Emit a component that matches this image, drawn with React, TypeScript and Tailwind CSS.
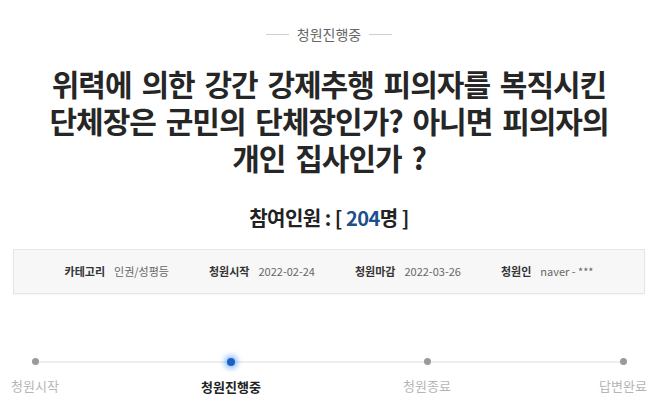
import React from 'react';

const font = { fontFamily: '"Noto Sans CJK KR", "Noto Sans", sans-serif' };

const steps = [
  { label: '청원시작', active: false },
  { label: '청원진행중', active: true },
  { label: '청원종료', active: false },
  { label: '답변완료', active: false },
];

const info = [
  { label: '카테고리', value: '인권/성평등' },
  { label: '청원시작', value: '2022-02-24' },
  { label: '청원마감', value: '2022-03-26' },
  { label: '청원인', value: 'naver - ***' },
];

export default function App() {
  return (
    <div
      className="w-[658px] h-[414px] bg-white flex flex-col items-center overflow-hidden"
      style={font}
    >
      {/* status header */}
      <div className="mt-[23px] flex items-center gap-[8px]">
        <span className="w-[23px] h-px bg-[#cfcfcf]" />
        <span className="text-[14px] leading-[22px] text-[#666]">청원진행중</span>
        <span className="w-[23px] h-px bg-[#cfcfcf]" />
      </div>

      {/* title */}
      <h1 className="mt-[20px] text-center text-[30px] leading-[37px] font-bold text-[#262626] tracking-[-1px] [word-spacing:4px]">
        위력에 의한 강간 강제추행 피의자를 복직시킨
        <br />
        단체장은 군민의 단체장인가? 아니면 피의자의
        <br />
        개인 집사인가 ?
      </h1>

      {/* participants */}
      <div className="mt-[28px] text-[20px] leading-[28px] font-bold text-[#222] tracking-[-0.5px]">
        참여인원 : [ <span className="text-[#1d4f8c]">204</span>명 ]
      </div>

      {/* info box */}
      <div className="mt-[17px] w-[632px] h-[45px] border border-[#e6e6e6] bg-[#f7f7f7] shadow-[0_1px_2px_rgba(0,0,0,0.04)] flex items-center justify-center gap-[40px] text-[11px]">
        {info.map((it) => (
          <div key={it.label} className="flex items-center gap-[9px]">
            <span className="font-bold text-[#333]">{it.label}</span>
            <span className="text-[#666]">{it.value}</span>
          </div>
        ))}
      </div>

      {/* stepper */}
      <div className="relative mt-[64px] w-full flex justify-between px-[5px]">
        <div className="absolute left-[35px] right-[35px] top-[3px] h-[2px] bg-[#eeeeee]" />
        {steps.map((s) => (
          <div key={s.label} className="relative w-[60px] flex flex-col items-center gap-[12px]">
            {s.active ? (
              <span className="w-[8px] h-[8px] rounded-full bg-[#1f5fc4] shadow-[0_0_5px_3px_rgba(70,150,255,0.55)]" />
            ) : (
              <span className="w-[7px] h-[7px] rounded-full bg-[#9a9a9a]" />
            )}
            <span
              className={
                s.active
                  ? 'text-[13px] leading-[18px] font-bold text-[#222] whitespace-nowrap'
                  : 'text-[13px] leading-[18px] text-[#b5b5b5] whitespace-nowrap'
              }
            >
              {s.label}
            </span>
          </div>
        ))}
      </div>
    </div>
  );
}
